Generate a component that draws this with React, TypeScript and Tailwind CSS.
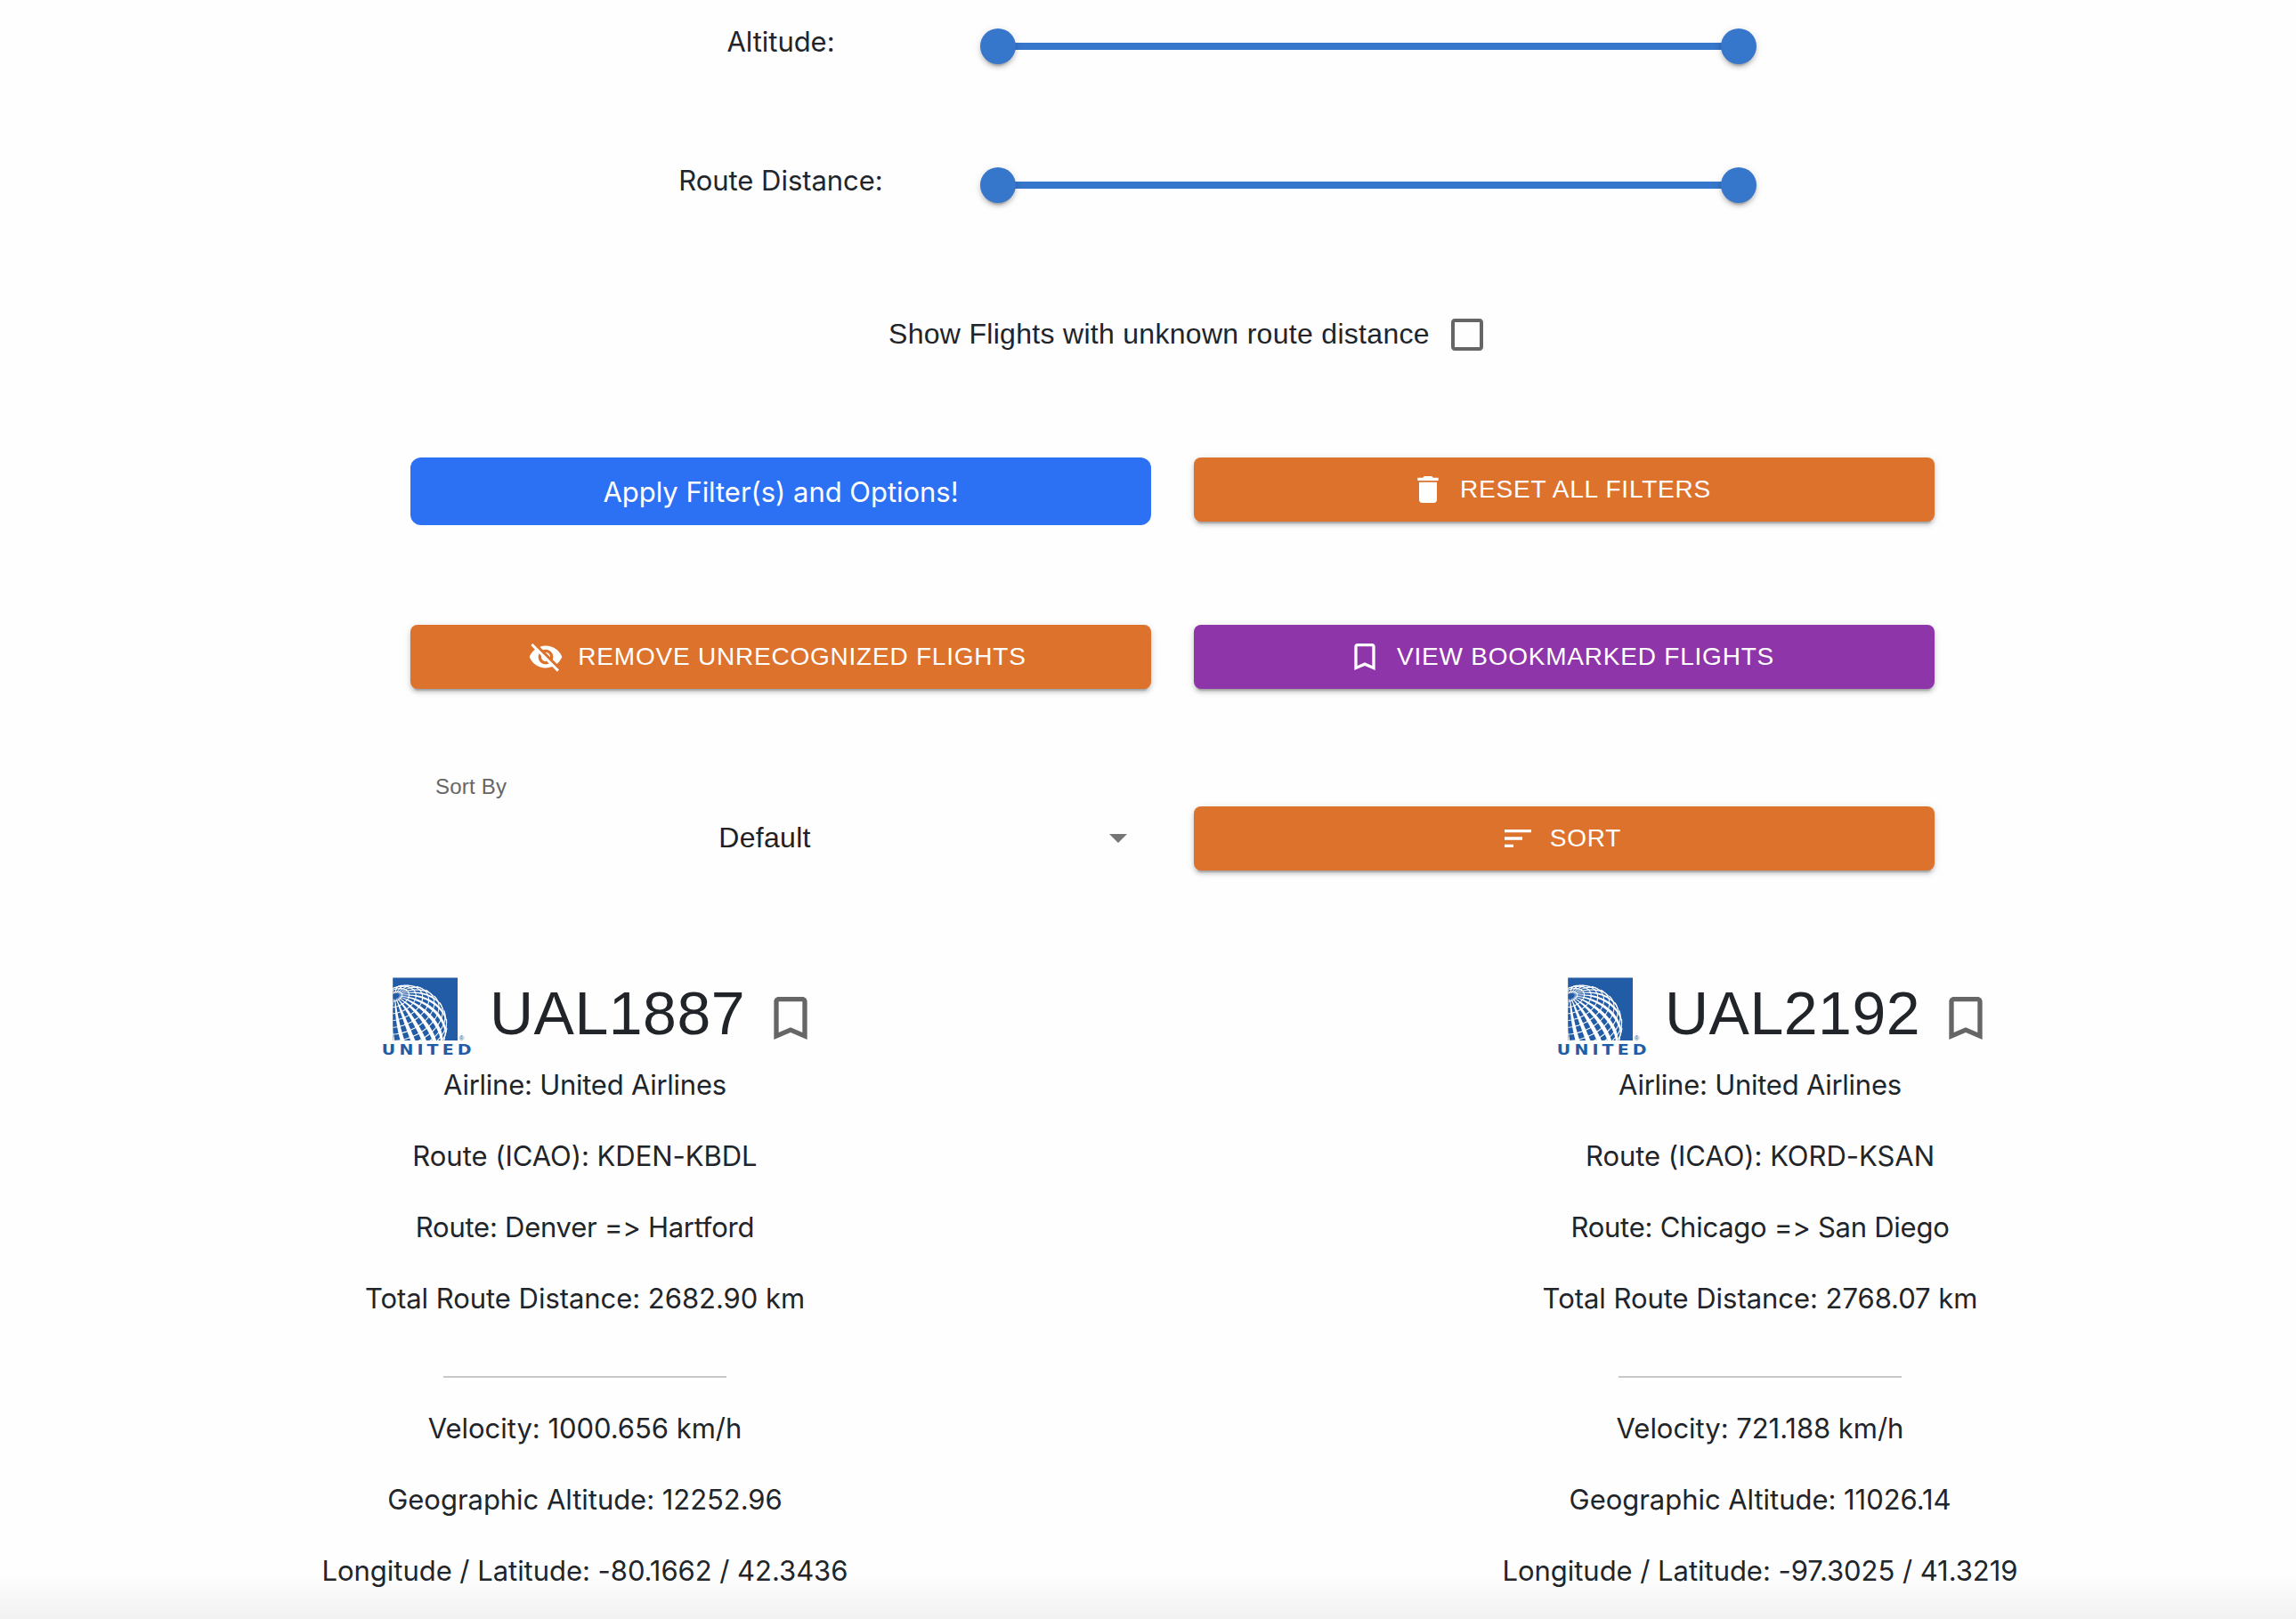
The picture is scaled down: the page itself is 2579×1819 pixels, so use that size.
import type { ReactNode } from "react";

const ICONS = {
  trash: "M6 19c0 1.1.9 2 2 2h8c1.1 0 2-.9 2-2V7H6v12zM19 4h-3.5l-1-1h-5l-1 1H5v2h14V4z",
  hidden:
    "M12 7c2.76 0 5 2.24 5 5 0 .65-.13 1.26-.36 1.83l2.92 2.92c1.51-1.26 2.7-2.89 3.43-4.75-1.73-4.39-6-7.5-11-7.5-1.4 0-2.74.25-3.98.7l2.16 2.16C10.74 7.13 11.35 7 12 7zM2 4.27l2.28 2.28.46.46C3.08 8.3 1.78 10.02 1 12c1.73 4.39 6 7.5 11 7.5 1.55 0 3.03-.3 4.38-.84l.42.42L19.73 22 21 20.73 3.27 3 2 4.27zM7.53 9.8l1.55 1.55c-.05.21-.08.43-.08.65 0 1.66 1.34 3 3 3 .22 0 .44-.03.65-.08l1.55 1.55c-.67.33-1.41.53-2.2.53-2.76 0-5-2.24-5-5 0-.79.2-1.53.53-2.2zm4.31-.78l3.15 3.15.02-.16c0-1.66-1.34-3-3-3l-.17.01z",
  bookmark:
    "M17 3H7c-1.1 0-1.99.9-1.99 2L5 21l7-3 7 3V5c0-1.1-.9-2-2-2zm0 15l-5-2.18L7 18V5h10v13z",
  sort: "M3 18h6v-2H3v2zM3 6v2h18V6H3zm0 7h12v-2H3v2z",
  checkbox:
    "M19 5v14H5V5h14m0-2H5c-1.1 0-2 .9-2 2v14c0 1.1.9 2 2 2h14c1.1 0 2-.9 2-2V5c0-1.1-.9-2-2-2z",
  dropdown: "M7 10l5 5 5-5z",
};

function Icon({ name, className }: { name: keyof typeof ICONS; className: string }) {
  return (
    <svg viewBox="0 0 24 24" fill="currentColor" className={"shrink-0 " + className}>
      <path d={ICONS[name]} />
    </svg>
  );
}

/* Globe of the airline logo: a tilted graticule in orthographic projection. */
const GLOBE = { cx: 27, cy: 54, r: 45 };
const POLE = [-0.29, -0.73, 0.619];
const E1 = [0.929, -0.37, 0];
const E2 = [
  POLE[1] * E1[2] - POLE[2] * E1[1],
  POLE[2] * E1[0] - POLE[0] * E1[2],
  POLE[0] * E1[1] - POLE[1] * E1[0],
];

function project(c: number, l: number) {
  const cr = (c * Math.PI) / 180;
  const lr = (l * Math.PI) / 180;
  const v = [0, 1, 2].map(
    (i) => Math.cos(cr) * POLE[i] + Math.sin(cr) * (Math.cos(lr) * E1[i] + Math.sin(lr) * E2[i]),
  );
  return { x: GLOBE.cx + GLOBE.r * v[0], y: GLOBE.cy + GLOBE.r * v[1], visible: v[2] > -0.02 };
}

function linePath(points: { x: number; y: number; visible: boolean }[]) {
  let d = "";
  let pen = false;
  for (const p of points) {
    if (p.visible) d += (pen ? "L" : "M") + p.x.toFixed(2) + " " + p.y.toFixed(2);
    pen = p.visible;
  }
  return d;
}

function range(from: number, to: number, step: number) {
  const out: number[] = [];
  for (let v = from; v <= to; v += step) out.push(v);
  return out;
}

const PARALLELS = range(10, 140, 10).map((c) =>
  linePath(range(0, 360, 4).map((l) => project(c, l))),
);
const MERIDIANS = range(0, 345, 15).map((l) => {
  const left = range(6, 126, 4).map((c) => project(c, l - 3.2)).filter((p) => p.visible);
  const right = range(6, 126, 4).map((c) => project(c, l + 3.2)).filter((p) => p.visible);
  return linePath([...left, ...right.reverse()]) + "Z";
});

function UnitedLogo() {
  return (
    <svg viewBox="0 0 100 90" className="h-[90px] w-[100px] shrink-0">
      <clipPath id="logo-square">
        <rect x="11.5" y="0.5" width="72.5" height="70.5" />
      </clipPath>
      <rect x="11.2" y="0.5" width="72.8" height="70.5" fill="#235ca6" />
      <g clipPath="url(#logo-square)">
        {PARALLELS.map((d, i) => (
          <path key={i} d={d} fill="none" stroke="#fff" strokeWidth="1.1" />
        ))}
        {MERIDIANS.map((d, i) => (
          <path key={i} d={d} fill="#fff" />
        ))}
        <circle
          cx={GLOBE.cx}
          cy={GLOBE.cy}
          r={GLOBE.r - 0.4}
          fill="none"
          stroke="#fff"
          strokeWidth="0.7"
        />
      </g>
      <text x="85.5" y="71" fontSize="8" fill="#235ca6" fontFamily="Liberation Sans, sans-serif">
        ®
      </text>
      <text
        x="-1"
        y="87"
        fontSize="16.5"
        fontWeight="700"
        fill="#235ca6"
        fontFamily="DejaVu Sans, sans-serif"
        textLength="87.5"
        lengthAdjust="spacing"
        transform="scale(1.15 1)"
      >
        UNITED
      </text>
    </svg>
  );
}

function Slider() {
  const thumb =
    "size-10 rounded-full bg-[#3676cb] shadow-[0_6px_2px_-4px_rgba(0,0,0,0.2),0_4px_4px_0_rgba(0,0,0,0.14),0_2px_10px_0_rgba(0,0,0,0.12)]";
  return (
    <div className="mt-8 ml-[104px] flex h-10 w-[872px] items-center">
      <div className={thumb + " relative"} />
      <div className="-mx-5 h-2 flex-1 bg-[#3676cb]" />
      <div className={thumb + " relative"} />
    </div>
  );
}

function FilterRow({ label }: { label: string }) {
  return (
    <div className="flex h-[156px] items-start pl-[757px]">
      <div className="mt-[23px] w-60 text-center whitespace-nowrap">{label}</div>
      <Slider />
    </div>
  );
}

function ActionButton({
  color,
  icon,
  children,
}: {
  color: string;
  icon: keyof typeof ICONS;
  children: ReactNode;
}) {
  return (
    <button
      className={
        "flex h-[72px] w-[832px] items-center justify-center rounded-lg pr-2 font-['Liberation_Sans',Arial,sans-serif] text-[28px] tracking-[0.78px] text-white shadow-[0_6px_2px_-4px_rgba(0,0,0,0.2),0_4px_4px_0_rgba(0,0,0,0.14),0_2px_10px_0_rgba(0,0,0,0.12)] " +
        color
      }
    >
      <Icon name={icon} className="mr-4 size-10" />
      <span>{children}</span>
    </button>
  );
}

type Flight = { callsign: string; route: string[]; position: string[] };

const FLIGHTS: Flight[] = [
  {
    callsign: "UAL1887",
    route: [
      "Airline: United Airlines",
      "Route (ICAO): KDEN-KBDL",
      "Route: Denver => Hartford",
      "Total Route Distance: 2682.90 km",
    ],
    position: [
      "Velocity: 1000.656 km/h",
      "Geographic Altitude: 12252.96",
      "Longitude / Latitude: -80.1662 / 42.3436",
    ],
  },
  {
    callsign: "UAL2192",
    route: [
      "Airline: United Airlines",
      "Route (ICAO): KORD-KSAN",
      "Route: Chicago => San Diego",
      "Total Route Distance: 2768.07 km",
    ],
    position: [
      "Velocity: 721.188 km/h",
      "Geographic Altitude: 11026.14",
      "Longitude / Latitude: -97.3025 / 41.3219",
    ],
  },
];

function FlightCard({ flight }: { flight: Flight }) {
  return (
    <div className="flex flex-col items-center">
      <div className="flex h-[97px] w-full items-start pl-[430px]">
        <UnitedLogo />
        <h4 className="ml-5 w-[306px] font-['Liberation_Sans',Arial,sans-serif] text-[68px] leading-[80px] tracking-[0.5px] whitespace-nowrap">
          {flight.callsign}
        </h4>
        <Icon name="bookmark" className="mt-3.5 size-16 text-[#666]" />
      </div>
      <div className="flex flex-col items-center gap-8 whitespace-nowrap">
        {flight.route.map((line) => (
          <p
            key={line}
            className={
              line.startsWith("Airline:") || line.startsWith("Route:") ? "tracking-[-0.25px]" : ""
            }
          >
            {line}
          </p>
        ))}
      </div>
      <hr className="mt-[63px] mb-[33px] h-0.5 w-[318px] border-0 bg-[#c8c8c8]" />
      <div className="flex flex-col items-center gap-8 whitespace-nowrap">
        {flight.position.map((line) => (
          <p key={line}>{line}</p>
        ))}
      </div>
    </div>
  );
}

export default function App() {
  return (
    <div className="relative h-[1819px] w-[2579px] overflow-hidden bg-[#fefefe] font-[Inter,'Noto_Sans',sans-serif] text-[31px] leading-[48px] tracking-[-0.04px] text-[#212529]">
      <FilterRow label="Altitude:" />
      <FilterRow label="Route Distance:" />

      <label className="flex h-[202px] items-start pl-[998px] font-['Liberation_Sans',Arial,sans-serif] text-[32px] tracking-[0.3px]">
        <span className="mt-[39px] w-[626px] whitespace-nowrap">
          Show Flights with unknown route distance
        </span>
        <Icon name="checkbox" className="mt-10 size-12 text-[#666]" />
      </label>

      <div className="flex h-[188px] items-start gap-12 pl-[461px]">
        <button className="flex h-[76px] w-[832px] items-center justify-center rounded-xl bg-[#2c70f4] pt-0.5 text-white">
          Apply Filter(s) and Options!
        </button>
        <ActionButton color="bg-[#dd722d]" icon="trash">
          RESET ALL FILTERS
        </ActionButton>
      </div>

      <div className="flex h-[166px] items-start gap-12 pl-[461px]">
        <ActionButton color="bg-[#dd722d]" icon="hidden">
          REMOVE UNRECOGNIZED FLIGHTS
        </ActionButton>
        <ActionButton color="bg-[#8e35a9]" icon="bookmark">
          VIEW BOOKMARKED FLIGHTS
        </ActionButton>
      </div>

      <div className="flex h-[230px] items-start gap-12 pl-[461px]">
        <div className="w-[832px] pr-[13px] pl-7 font-['Liberation_Sans',Arial,sans-serif] tracking-[0.3px]">
          <div className="text-2xl leading-8 tracking-[0.22px] text-[#666]">Sort By</div>
          <div className="mt-[17px] flex h-12 items-center">
            <div className="w-[743px] pr-[3px] text-center text-[32px] text-[#212121]">
              Default
            </div>
            <Icon name="dropdown" className="size-12 text-[#757575]" />
          </div>
        </div>
        <div className="pt-[38px]">
          <ActionButton color="bg-[#dd722d]" icon="sort">
            SORT
          </ActionButton>
        </div>
      </div>

      <div className="grid grid-cols-[1314px_1314px] gap-1.5">
        {FLIGHTS.map((flight) => (
          <FlightCard key={flight.callsign} flight={flight} />
        ))}
      </div>

      <div className="pointer-events-none absolute inset-x-0 bottom-0 h-[52px] bg-gradient-to-b from-black/0 to-black/5" />
    </div>
  );
}
